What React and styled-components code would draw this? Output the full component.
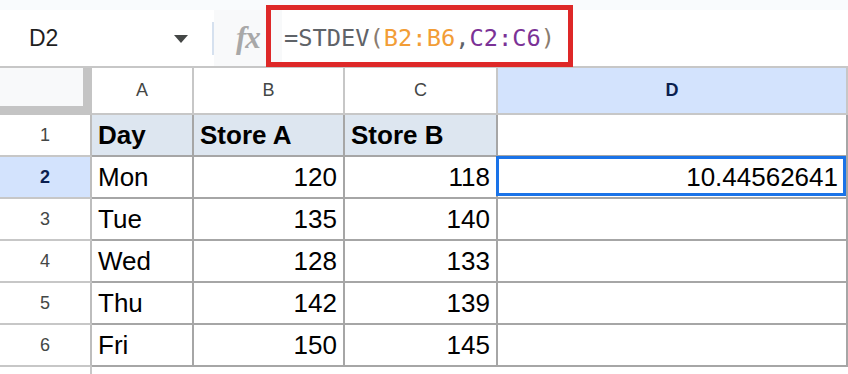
import React from 'react';
import styled, { createGlobalStyle, css } from 'styled-components';

const GlobalStyle = createGlobalStyle`
  html, body {
    margin: 0;
    padding: 0;
    background: #ffffff;
  }
  body {
    font-family: "Liberation Sans", Arial, sans-serif;
  }
`;

const Page = styled.div`
  width: 848px;
  height: 374px;
  overflow: hidden;
  background: #ffffff;
`;

const TopStrip = styled.div`
  height: 10px;
  background: #f9fbfd;
`;

const Toolbar = styled.div`
  position: relative;
  display: flex;
  height: 56px;
  background: #ffffff;
`;

const NameBox = styled.div`
  width: 212px;
  box-sizing: border-box;
  display: flex;
  align-items: center;
  justify-content: space-between;
  padding: 0 24px 0 29px;
  font-size: 23px;
  color: #1f1f1f;
`;

const Caret = styled.span`
  width: 0;
  height: 0;
  border-left: 7.5px solid transparent;
  border-right: 7.5px solid transparent;
  border-top: 8px solid #444746;
  margin-top: 2px;
`;

const Divider = styled.div`
  width: 2px;
  margin: 12px 0 11px;
  background: #d6e1ef;
`;

const FxArea = styled.div`
  width: 68px;
  box-sizing: border-box;
  display: flex;
  align-items: center;
  padding-left: 22px;
  background: #f8f9fa;
  font-family: "Liberation Serif", "Times New Roman", serif;
  font-style: italic;
  font-weight: bold;
  font-size: 31px;
  color: #a8a8a8;
  letter-spacing: -1px;
`;

const Formula = styled.div`
  flex: 1;
  display: flex;
  align-items: center;
  padding-left: 2px;
  font-family: "DejaVu Sans Mono", "Liberation Mono", monospace;
  font-size: 23.7px;
  color: #5f6368;
  white-space: pre;
`;

const Token = styled.span`
  color: ${(p) => p.$color || '#5f6368'};
`;

const Highlight = styled.div`
  position: absolute;
  left: 266px;
  top: -5px;
  width: 307px;
  height: 62px;
  box-sizing: border-box;
  border: 5px solid #de2828;
  pointer-events: none;
`;

const Sheet = styled.div`
  display: grid;
  grid-template-columns: 92px 102px 151px 153px 350px;
  grid-template-rows: 47px repeat(6, 42px) 20px;
  border-top: 2px solid #c7c7c7;
`;

const Corner = styled.div`
  background: #f8f9fa;
  border-right: 9px solid #c4c4c4;
  border-bottom: 9px solid #c4c4c4;
`;

const selectedHeader = css`
  background: #d3e3fd;
  color: #0b1f4f;
  font-weight: bold;
`;

const ColHeader = styled.div`
  display: flex;
  align-items: center;
  justify-content: center;
  font-size: 18px;
  color: #444746;
  border-right: 2px solid #c7c7c7;
  border-bottom: 2px solid #c7c7c7;
  ${(p) => p.$selected && selectedHeader}
`;

const RowHeader = styled.div`
  display: flex;
  align-items: center;
  justify-content: center;
  font-size: 18px;
  color: #444746;
  border-right: 2px solid #bdbdbd;
  border-bottom: 2px solid #c7c7c7;
  ${(p) => p.$selected && selectedHeader}
`;

const Cell = styled.div`
  position: relative;
  display: flex;
  align-items: center;
  justify-content: ${(p) => (p.$num ? 'flex-end' : 'flex-start')};
  padding: 0 ${(p) => (p.$active ? '8px' : '6px')} 0 6px;
  font-size: 26px;
  color: #000000;
  border-right: 2px solid #a6a6a6;
  border-bottom: 2px solid #a6a6a6;
  ${(p) =>
    p.$head &&
    css`
      background: #dde6f0;
      font-weight: bold;
    `}
  ${(p) =>
    p.$active &&
    css`
      &::after {
        content: '';
        position: absolute;
        left: -2px;
        top: -1px;
        right: 0;
        bottom: 1px;
        border: 3px solid #1a73e8;
        pointer-events: none;
      }
    `}
`;

const Filler = styled.div`
  border-right: ${(p) => (p.$edge ? '2px solid #c7c7c7' : 'none')};
`;

const columns = ['A', 'B', 'C', 'D'];

const rows = [
  ['Day', 'Store A', 'Store B', ''],
  ['Mon', '120', '118', '10.44562641'],
  ['Tue', '135', '140', ''],
  ['Wed', '128', '133', ''],
  ['Thu', '142', '139', ''],
  ['Fri', '150', '145', ''],
];

export default function App() {
  return (
    <Page>
      <GlobalStyle />
      <TopStrip />
      <Toolbar>
        <NameBox>
          <span>D2</span>
          <Caret />
        </NameBox>
        <Divider />
        <FxArea>fx</FxArea>
        <Formula>
          <Token>=STDEV</Token>
          <Token $color="#8a7c70">(</Token>
          <Token $color="#f29d36">B2:B6</Token>
          <Token>,</Token>
          <Token $color="#7b3296">C2:C6</Token>
          <Token $color="#8a7c70">)</Token>
        </Formula>
        <Highlight />
      </Toolbar>
      <Sheet>
        <Corner />
        {columns.map((c) => (
          <ColHeader key={c} $selected={c === 'D'}>
            {c}
          </ColHeader>
        ))}
        {rows.map((row, r) => (
          <React.Fragment key={r}>
            <RowHeader $selected={r === 1}>{r + 1}</RowHeader>
            {row.map((value, c) => (
              <Cell
                key={c}
                $head={r === 0 && c < 3}
                $num={r > 0 && c > 0}
                $active={r === 1 && c === 3}
              >
                {value}
              </Cell>
            ))}
          </React.Fragment>
        ))}
        <Filler $edge />
      </Sheet>
    </Page>
  );
}
